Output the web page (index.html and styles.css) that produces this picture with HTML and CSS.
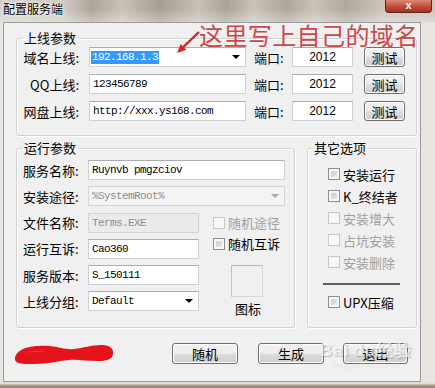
FILE: index.html
```html
<!DOCTYPE html>
<html lang="zh-CN">
<head>
    <meta charset="UTF-8">
    <title>配置服务端</title>
    <link rel="stylesheet" href="styles.css">
</head>
<body>
    <!-- 标题栏 -->
    <div class="titlebar">
        <span class="title">配置服务端</span>
        <span class="close">x</span>
    </div>

    <div class="frame">
        <div class="panel">
            <!-- 上线参数 -->
            <fieldset class="group group-online">
                <legend>上线参数</legend>
                <div class="row">
                    <label class="lbl">域名上线:</label>
                    <div class="combo online-input"><span class="selected">192.168.1.3</span><span class="arrow"></span></div>
                    <label class="port-lbl">端口:</label>
                    <div class="field port">2012</div>
                    <button class="btn test-btn">测试</button>
                </div>
                <div class="row">
                    <label class="lbl">QQ上线:</label>
                    <div class="field online-input">123456789</div>
                    <label class="port-lbl">端口:</label>
                    <div class="field port">2012</div>
                    <button class="btn test-btn">测试</button>
                </div>
                <div class="row">
                    <label class="lbl">网盘上线:</label>
                    <div class="field online-input">http://xxx.ys168.com</div>
                    <label class="port-lbl">端口:</label>
                    <div class="field port">2012</div>
                    <button class="btn test-btn">测试</button>
                </div>
            </fieldset>

            <div class="groups">
                <!-- 运行参数 -->
                <fieldset class="group group-run">
                    <legend>运行参数</legend>
                    <div class="row">
                        <label class="lbl-run">服务名称:</label>
                        <div class="field wide">Ruynvb pmgzciov</div>
                    </div>
                    <div class="row">
                        <label class="lbl-run">安装途径:</label>
                        <div class="combo wide disabled">%SystemRoot%<span class="arrow"></span></div>
                    </div>
                    <div class="split">
                        <div class="col">
                            <div class="row">
                                <label class="lbl-run">文件名称:</label>
                                <div class="field narrow disabled">Terms.EXE</div>
                            </div>
                            <div class="row">
                                <label class="lbl-run">运行互诉:</label>
                                <div class="field narrow">Cao360</div>
                            </div>
                            <div class="row">
                                <label class="lbl-run">服务版本:</label>
                                <div class="field narrow">S_150111</div>
                            </div>
                            <div class="row">
                                <label class="lbl-run">上线分组:</label>
                                <div class="combo narrow">Default<span class="arrow"></span></div>
                            </div>
                        </div>
                        <div class="extra">
                            <div class="check off"><span class="box"></span>随机途径</div>
                            <div class="check tight"><span class="box"></span>随机互诉</div>
                            <div class="icon-box"></div>
                            <div class="icon-label">图标</div>
                        </div>
                    </div>
                </fieldset>

                <!-- 其它选项 -->
                <fieldset class="group group-other">
                    <legend>其它选项</legend>
                    <div class="opts">
                        <div class="opt"><span class="box"></span>安装运行</div>
                        <div class="opt"><span class="box"></span>K_终结者</div>
                        <div class="opt off"><span class="box"></span>安装增大</div>
                        <div class="opt off"><span class="box"></span>占坑安装</div>
                        <div class="opt off"><span class="box"></span>安装删除</div>
                        <div class="separator"></div>
                        <div class="opt upx"><span class="box"></span>UPX压缩</div>
                    </div>
                </fieldset>
            </div>

            <!-- 底部按钮 -->
            <div class="actions">
                <svg class="scribble" width="100" height="22" viewBox="0 0 100 22">
                    <path d="M1 15 C3 5, 18 2, 36 3 C46 4, 52 7, 60 6 C70 5, 76 2, 88 2 C96 2, 100 6, 99 11 C98 17, 92 18, 84 18 C72 18, 64 16, 55 17 C44 18, 34 21, 20 21 C8 21, 0 21, 1 15 Z" fill="#e3141b"/>
                    <path d="M14 9 L30 8" stroke="#f04a4a" stroke-width="1" opacity="0.7"/>
                </svg>
                <button class="btn act-btn first">随机</button>
                <button class="btn act-btn">生成</button>
                <button class="btn act-btn last">退出</button>
            </div>
        </div>
    </div>
    <div class="bottom-edge"></div>

    <!-- 标注 -->
    <div class="note">这里写上自己的域名</div>
    <svg class="note-arrow" width="32" height="30" viewBox="0 0 32 30">
        <line x1="27" y1="4" x2="11.5" y2="18.8" stroke="#d22626" stroke-width="2.4"/>
        <polygon points="5,25 14.3,21.7 8.7,15.9" fill="#d22626"/>
    </svg>

    <!-- 水印 -->
    <div class="watermark">
        <span class="wm-main">Bai<span class="wm-gap">du</span>经验</span>
        <span class="wm-url">jingyan.baidu.com</span>
    </div>
</body>
</html>
```

FILE: styles.css
```css
* {
    box-sizing: border-box;
}

body {
    margin: 0;
    width: 435px;
    height: 388px;
    overflow: hidden;
    position: relative;
    font-family: "Noto Sans CJK SC", sans-serif;
    font-size: 13px;
    color: #000;
    background: #e8e5e0;
}

/* 标题栏 */
.titlebar {
    height: 22px;
    display: flex;
    justify-content: space-between;
    align-items: flex-start;
    background:
        linear-gradient(to bottom, rgba(255, 255, 255, 0) 40%, rgba(255, 255, 255, 0.35)),
        linear-gradient(90deg, #d3cfc8 0, #cfcac2 64px, #aca597 92px, #c8c2b8 122px, #a59e90 160px, #c6c0b6 198px, #aaa395 226px, #c9c3b9 254px, #ada698 286px, #c8c2b8 314px, #b0a99b 346px, #cbc6bd 384px);
}

.title {
    padding-left: 3px;
    font-size: 12px;
    line-height: 18px;
    text-shadow: 0 0 3px #fff, 0 0 5px #fff;
}

.close {
    width: 47px;
    height: 13px;
    margin-right: 3px;
    border: 1px solid #5e2419;
    border-top: none;
    border-radius: 0 0 4px 4px;
    background: linear-gradient(#dc8a76, #c4503a 50%, #a5321d);
    color: #fff;
    font-family: "Liberation Sans", sans-serif;
    font-weight: bold;
    font-size: 11px;
    line-height: 11px;
    text-align: center;
}

/* 窗口 */
.frame {
    display: flex;
}

.panel {
    width: 418px;
    height: 360px;
    margin-left: 3px;
    border: 1px solid #9c9c9c;
    background: #f0f0f0;
}

.bottom-edge {
    height: 6px;
    background: linear-gradient(#e2ded7 0, #e2ded7 2px, #aa9e89 3px, #8f8472);
}

/* 分组框 */
.group {
    margin: 0;
    padding: 0;
    min-width: 0;
    border: 1px solid #d3d3d3;
    border-radius: 3px;
    box-shadow: inset 1px 1px 0 #fff, 1px 1px 0 #fff;
}

.group legend {
    margin-left: 5px;
    padding: 0 2px;
    font-size: 13px;
    line-height: 14px;
}

.group-online {
    width: 401px;
    margin: 8px 0 0 12px;
    padding: 2px 0 14px;
}

.row {
    display: flex;
    align-items: center;
    height: 20px;
}

.group-online .row + .row {
    margin-top: 7px;
}

.lbl {
    width: 62px;
    margin-right: 10px;
    text-align: right;
    white-space: nowrap;
}

.field,
.combo {
    height: 20px;
    display: flex;
    align-items: center;
    padding: 0 3px;
    border: 1px solid #cdd0d6;
    border-top-color: #abadb3;
    background: #fff;
    font-family: "Liberation Mono", monospace;
    font-size: 11px;
    letter-spacing: -0.6px;
    white-space: nowrap;
}

.combo {
    justify-content: space-between;
    padding-right: 5px;
}

.arrow {
    width: 0;
    height: 0;
    border-left: 4px solid transparent;
    border-right: 4px solid transparent;
    border-top: 4px solid #000;
}

.selected {
    margin-left: -2px;
    padding: 0 1px;
    background: #3399ff;
    color: #fff;
    line-height: 13px;
}

.online-input {
    width: 157px;
}

.port-lbl {
    width: 30px;
    margin-left: 8px;
    white-space: nowrap;
}

.port {
    width: 61px;
    margin-left: 8px;
    justify-content: center;
    font-family: "Liberation Sans", sans-serif;
    font-size: 12px;
    letter-spacing: 0;
}

.btn {
    padding: 0;
    border: 1px solid #707070;
    border-radius: 3px;
    background: linear-gradient(#f2f2f2 0, #ebebeb 50%, #dddddd 51%, #cfcfcf 100%);
    box-shadow: inset 0 0 0 1px #fcfcfc;
    font-family: "Noto Sans CJK SC", sans-serif;
    font-size: 13px;
    line-height: 17px;
    color: #000;
}

.test-btn {
    width: 41px;
    height: 20px;
    margin-left: 11px;
}

/* 运行参数 / 其它选项 */
.groups {
    display: flex;
    gap: 12px;
    margin: 5px 0 0 12px;
}

.group-run {
    width: 279px;
    padding: 5px 0 11px;
    display: flex;
    flex-direction: column;
    gap: 6.3px;
}

.lbl-run {
    width: 61px;
    padding-left: 6px;
    margin-right: 10px;
    white-space: nowrap;
}

.wide {
    width: 197px;
}

.narrow {
    width: 111px;
}

.disabled {
    background: #f4f4f4;
    border-color: #d4d4d4;
    color: #8d8d8d;
}

.field.disabled {
    background: #ebebeb;
}

.disabled .arrow {
    border-top-color: #a8a8a8;
}

.split {
    display: flex;
}

.col {
    display: flex;
    flex-direction: column;
    gap: 6.3px;
}

.extra {
    margin-left: 14px;
    display: flex;
    flex-direction: column;
}

.check,
.opt {
    display: flex;
    align-items: center;
    white-space: nowrap;
}

.check {
    height: 20px;
}

.check.tight {
    margin-top: 1px;
}

.box {
    width: 12px;
    height: 12px;
    margin-right: 3px;
    border: 1px solid #8e8f8f;
    background: linear-gradient(135deg, #c6c6c6, #eeeeee);
    box-shadow: inset 0 0 0 2px #f6f6f6;
}

.off {
    color: #a0a0a0;
}

.off .box {
    border-color: #c8c8c8;
    background: #f7f7f7;
    box-shadow: none;
}

.icon-box {
    width: 32px;
    height: 32px;
    margin: 11px 0 0 18px;
    border: 1px solid #d8d8d8;
    border-top-color: #b9b9b9;
    border-left-color: #c4c4c4;
}

.icon-label {
    margin: 5px 0 0 22px;
    line-height: 14px;
}

.group-other {
    width: 110px;
}

.group-other legend {
    margin-left: 4px;
}

.opts {
    padding: 8px 0 0 20px;
}

.opt {
    height: 22px;
}

.separator {
    width: 77px;
    height: 2px;
    margin: 10px 0 0 -5px;
    background: #5e5e5e;
}

.opt.upx {
    margin-top: 6px;
}

/* 底部 */
.actions {
    display: flex;
    align-items: center;
    height: 22px;
    margin-top: 15px;
}

.scribble {
    flex-shrink: 0;
    margin-left: 10px;
}

.act-btn {
    width: 66px;
    height: 21px;
    margin-left: 20px;
}

.act-btn.first {
    margin-left: 58px;
}

.act-btn.last {
    width: 65px;
    margin-left: 19px;
}

/* 标注与水印 */
.note {
    position: absolute;
    left: 199px;
    top: 22px;
    font-size: 24px;
    line-height: 26px;
    letter-spacing: 0.4px;
    color: #cc474b;
    white-space: nowrap;
}

.note-arrow {
    position: absolute;
    left: 172px;
    top: 28px;
}

.watermark {
    position: absolute;
    left: 320px;
    top: 341px;
    display: flex;
    flex-direction: column;
    align-items: center;
    color: rgba(255, 255, 255, 0.65);
    text-shadow: 1px 1px 1px rgba(0, 0, 0, 0.2);
    pointer-events: none;
}

.wm-main {
    font-family: "Liberation Sans", sans-serif;
    font-weight: bold;
    font-size: 17px;
    line-height: 20px;
    letter-spacing: 1px;
}

.wm-gap {
    margin-left: 4px;
}

.wm-url {
    font-family: "Liberation Sans", sans-serif;
    font-size: 8px;
    line-height: 10px;
    color: rgba(255, 255, 255, 0.6);
    text-shadow: 0 0 1px rgba(0, 0, 0, 0.12);
}
```
